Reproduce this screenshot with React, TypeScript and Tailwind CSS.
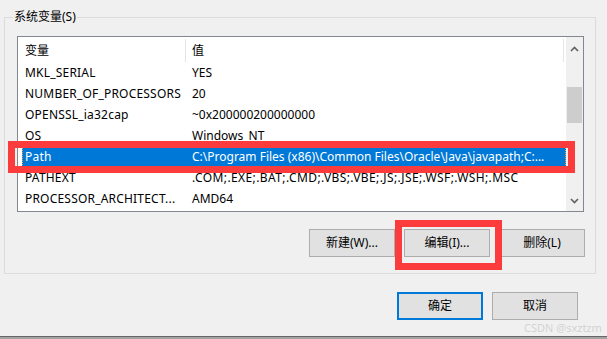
import React from "react";

const rows: [string, string, string][] = [
  ["MKL_SERIAL", "YES", ""],
  ["NUMBER_OF_PROCESSORS", "20", ""],
  ["OPENSSL_ia32cap", "~0x200000200000000", ""],
  ["OS", "Windows_NT", ""],
  ["Path", "C:\\Program Files (x86)\\Common Files\\Oracle\\Java\\javapath;C:...", ""],
  ["PATHEXT", ".COM;.EXE;.BAT;.CMD;.VBS;.VBE;.JS;.JSE;.WSF;.WSH;.MSC", "tracking-[0.4px]"],
  ["PROCESSOR_ARCHITECT...", "AMD64", ""],
];

function Btn({ label, primary }: { label: string; primary?: boolean }) {
  return (
    <div
      className={
        "w-[86px] h-[28px] flex items-center justify-center bg-[#e1e1e1] text-[12px] text-black " +
        (primary ? "border-2 border-[#0078d7]" : "border border-[#adadad]")
      }
    >
      {label}
    </div>
  );
}

export default function App() {
  return (
    <div
      className="relative w-[607px] h-[339px] bg-[#f0f0f0] overflow-hidden text-[12px] text-black"
      style={{ fontFamily: '"Noto Sans", "Noto Sans CJK SC", sans-serif' }}
    >
      <div className="flex flex-col h-full">
        <div className="pt-[17px] pl-[4px]">
          {/* group box */}
          <div className="relative w-[592px] h-[257px] border border-[#dcdcdc] flex flex-col">
            <div className="absolute -top-[10px] left-[8px] bg-[#f0f0f0] px-[1px] leading-[18px]">
              系统变量(S)
            </div>
            {/* list box */}
            <div className="ml-[12px] mt-[18px] w-[567px] h-[176px] border border-[#828790] bg-white flex overflow-hidden">
              <div className="flex-1 flex flex-col min-w-0">
                {/* header */}
                <div className="h-[25px] flex items-stretch pt-[2px]">
                  <div className="w-[168px] flex items-center pl-[7px] border-r border-[#e5e5e5]">变量</div>
                  <div className="w-[378px] flex items-center pl-[6px] border-r border-[#e5e5e5]">值</div>
                </div>
                {rows.map(([k, v, tr]) => {
                  const sel = k === "Path";
                  return (
                    <div key={k} className="h-[21px] flex items-stretch">
                      <div
                        className={
                          "ml-[4px] flex-1 flex items-stretch " +
                          (sel ? "bg-[#0078d7] text-white outline-1 outline-dotted outline-[#f0a040] -outline-offset-1" : "")
                        }
                      >
                        <div className="w-[164px] flex items-center pl-[3px] whitespace-nowrap overflow-hidden tracking-[0.2px]">{k}</div>
                        <div className={"flex-1 flex items-center pl-[6px] whitespace-nowrap overflow-hidden " + tr}>{v}</div>
                      </div>
                    </div>
                  );
                })}
              </div>
              {/* scrollbar */}
              <div className="w-[17px] bg-[#f0f0f0] flex flex-col items-center">
                <div className="h-[17px] w-full flex items-center justify-center mt-[3px]">
                  <svg width="9" height="6" viewBox="0 0 9 6">
                    <path d="M1 5 L4.5 1.5 L8 5" stroke="#606060" strokeWidth="1.6" fill="none" />
                  </svg>
                </div>
                <div className="mt-[30px] w-[15px] h-[36px] bg-[#cdcdcd]" />
                <div className="flex-1" />
                <div className="h-[17px] w-full flex items-center justify-center mb-[2px]">
                  <svg width="9" height="6" viewBox="0 0 9 6">
                    <path d="M1 1 L4.5 4.5 L8 1" stroke="#606060" strokeWidth="1.6" fill="none" />
                  </svg>
                </div>
              </div>
            </div>
            {/* buttons */}
            <div className="flex justify-end gap-[9px] mt-[17px] mr-[10px]">
              <Btn label="新建(W)..." />
              <Btn label="编辑(I)..." />
              <Btn label="删除(L)" />
            </div>
          </div>
        </div>
        <div className="flex justify-end gap-[9px] mt-[18px] mr-[29px]">
          <Btn label="确定" primary />
          <Btn label="取消" />
        </div>
        <div className="flex-1" />
        <div className="h-[3px] border-t border-[#666666] bg-[#a3a3a3]" />
      </div>

      {/* annotations */}
      <div className="absolute left-[8px] top-[141px] w-[567px] h-[32px] border-[7px] border-[#fc3c3c]" />
      <div className="absolute left-[395px] top-[220px] w-[107px] h-[50px] border-[7px] border-[#fc3c3c]" />
      <div className="absolute left-[524px] top-[320px] text-[11px] text-[#cfcfcf] whitespace-nowrap" style={{ textShadow: "0 0 1px #ffffff" }}>
        CSDN @sxztzm
      </div>
    </div>
  );
}
